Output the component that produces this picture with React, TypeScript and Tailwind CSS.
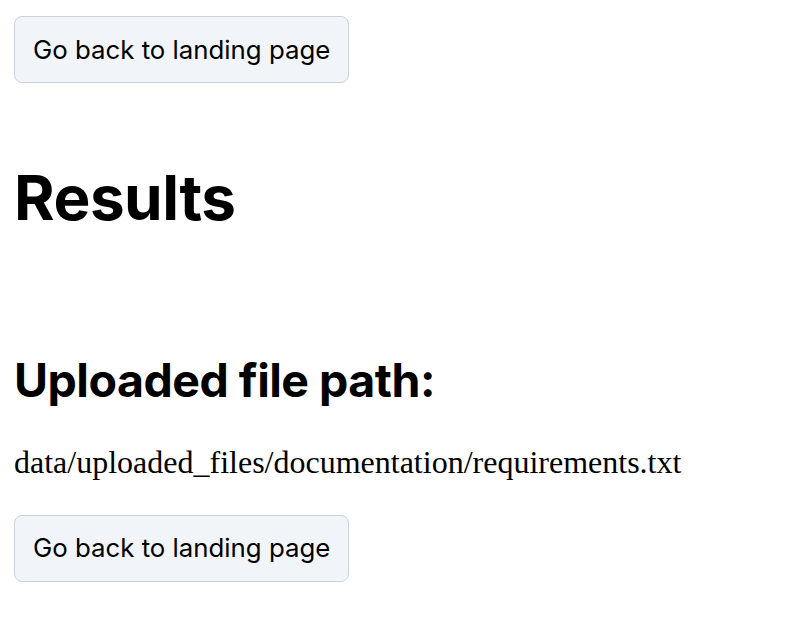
export default function App() {
  const btn =
    "h-[67px] px-[18px] rounded-[8px] border border-[#c8d2df] bg-[#f1f5f9] text-[25.8px] text-black leading-none";
  return (
    <div className="bg-white min-h-screen px-[14px] pt-[16px] font-['Inter',sans-serif] text-black">
      <button className={btn}>Go back to landing page</button>
      <h1 className="mt-[84px] text-[62px] font-bold leading-none tracking-[-0.5px]">Results</h1>
      <h2 className="mt-[128px] text-[46.5px] font-bold leading-none tracking-[-0.5px]">Uploaded file path:</h2>
      <p className="mt-[42px] font-['Liberation_Serif',serif] text-[32px] leading-none">
        data/uploaded_files/documentation/requirements.txt
      </p>
      <div className="mt-[37px]">
        <button className={btn}>Go back to landing page</button>
      </div>
    </div>
  );
}
